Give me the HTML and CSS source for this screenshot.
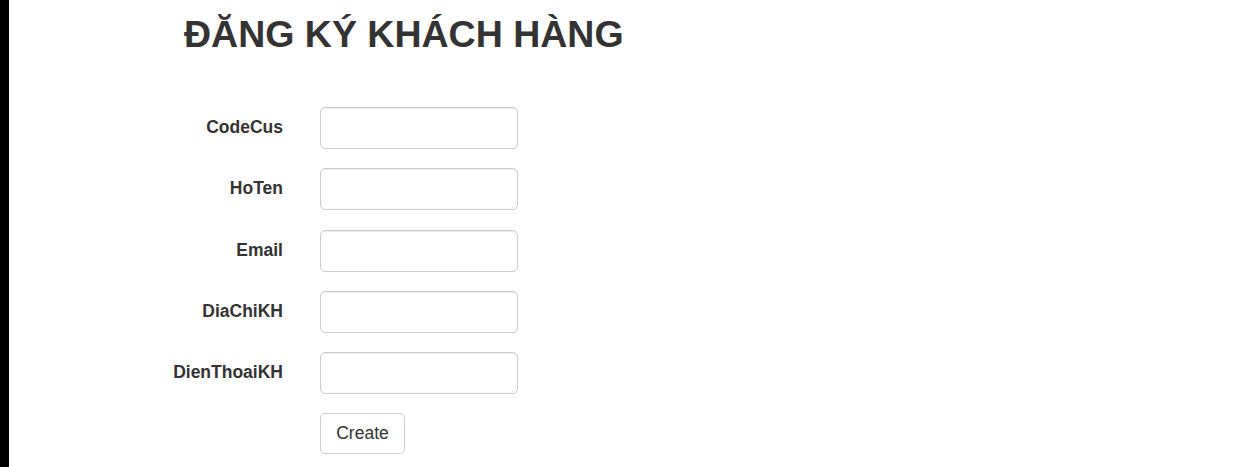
FILE: index.html
```html
<!DOCTYPE html>
<html lang="vi">
<head>
<meta charset="utf-8">
<title>Đăng ký khách hàng</title>
<link rel="stylesheet" href="styles.css">
</head>
<body>
<div class="edge"></div>
<main class="page">
  <h2 class="title">ĐĂNG KÝ KHÁCH HÀNG</h2>
  <form class="form">
    <label class="label" for="code">CodeCus</label>
    <input class="input" id="code" type="text">
    <label class="label" for="hoten">HoTen</label>
    <input class="input" id="hoten" type="text">
    <label class="label" for="email">Email</label>
    <input class="input" id="email" type="text">
    <label class="label" for="diachi">DiaChiKH</label>
    <input class="input" id="diachi" type="text">
    <label class="label" for="dt">DienThoaiKH</label>
    <input class="input" id="dt" type="text">
    <span></span>
    <div><button class="btn" type="button">Create</button></div>
  </form>
</main>
</body>
</html>
```
FILE: styles.css
```css
html, body {
  margin: 0;
  padding: 0;
  background: #fff;
  height: 100%;
}
body {
  display: flex;
  font-family: "Liberation Sans", Arial, Helvetica, sans-serif;
  color: #333;
  overflow: hidden;
}
.edge {
  width: 9px;
  flex: none;
  background: #000;
  min-height: 467px;
}
.page {
  flex: 1;
}
.title {
  margin: 14px 0 0 175px;
  font-size: 37.5px;
  line-height: 41px;
  font-weight: bold;
  color: #333;
}
.form {
  margin-top: 52px;
  display: grid;
  grid-template-columns: 274px 198px;
  column-gap: 37px;
  row-gap: 19.25px;
  align-items: center;
}
.label {
  text-align: right;
  font-weight: bold;
  font-size: 17.5px;
  line-height: 25px;
  padding-bottom: 1px;
}
.input {
  box-sizing: border-box;
  width: 198px;
  height: 42px;
  border: 1px solid #ccc;
  border-radius: 5px;
  box-shadow: inset 0 1px 1px rgba(0,0,0,0.075);
  font-size: 17.5px;
  font-family: inherit;
  padding: 7px 15px;
  margin: 0;
  background: #fff;
}
.btn {
  box-sizing: border-box;
  width: 85px;
  height: 41px;
  border: 1px solid #ccc;
  border-radius: 5px;
  background: #fff;
  color: #333;
  font-family: inherit;
  font-size: 17.5px;
  padding: 0 0 1px;
  margin: 0;
}
```
